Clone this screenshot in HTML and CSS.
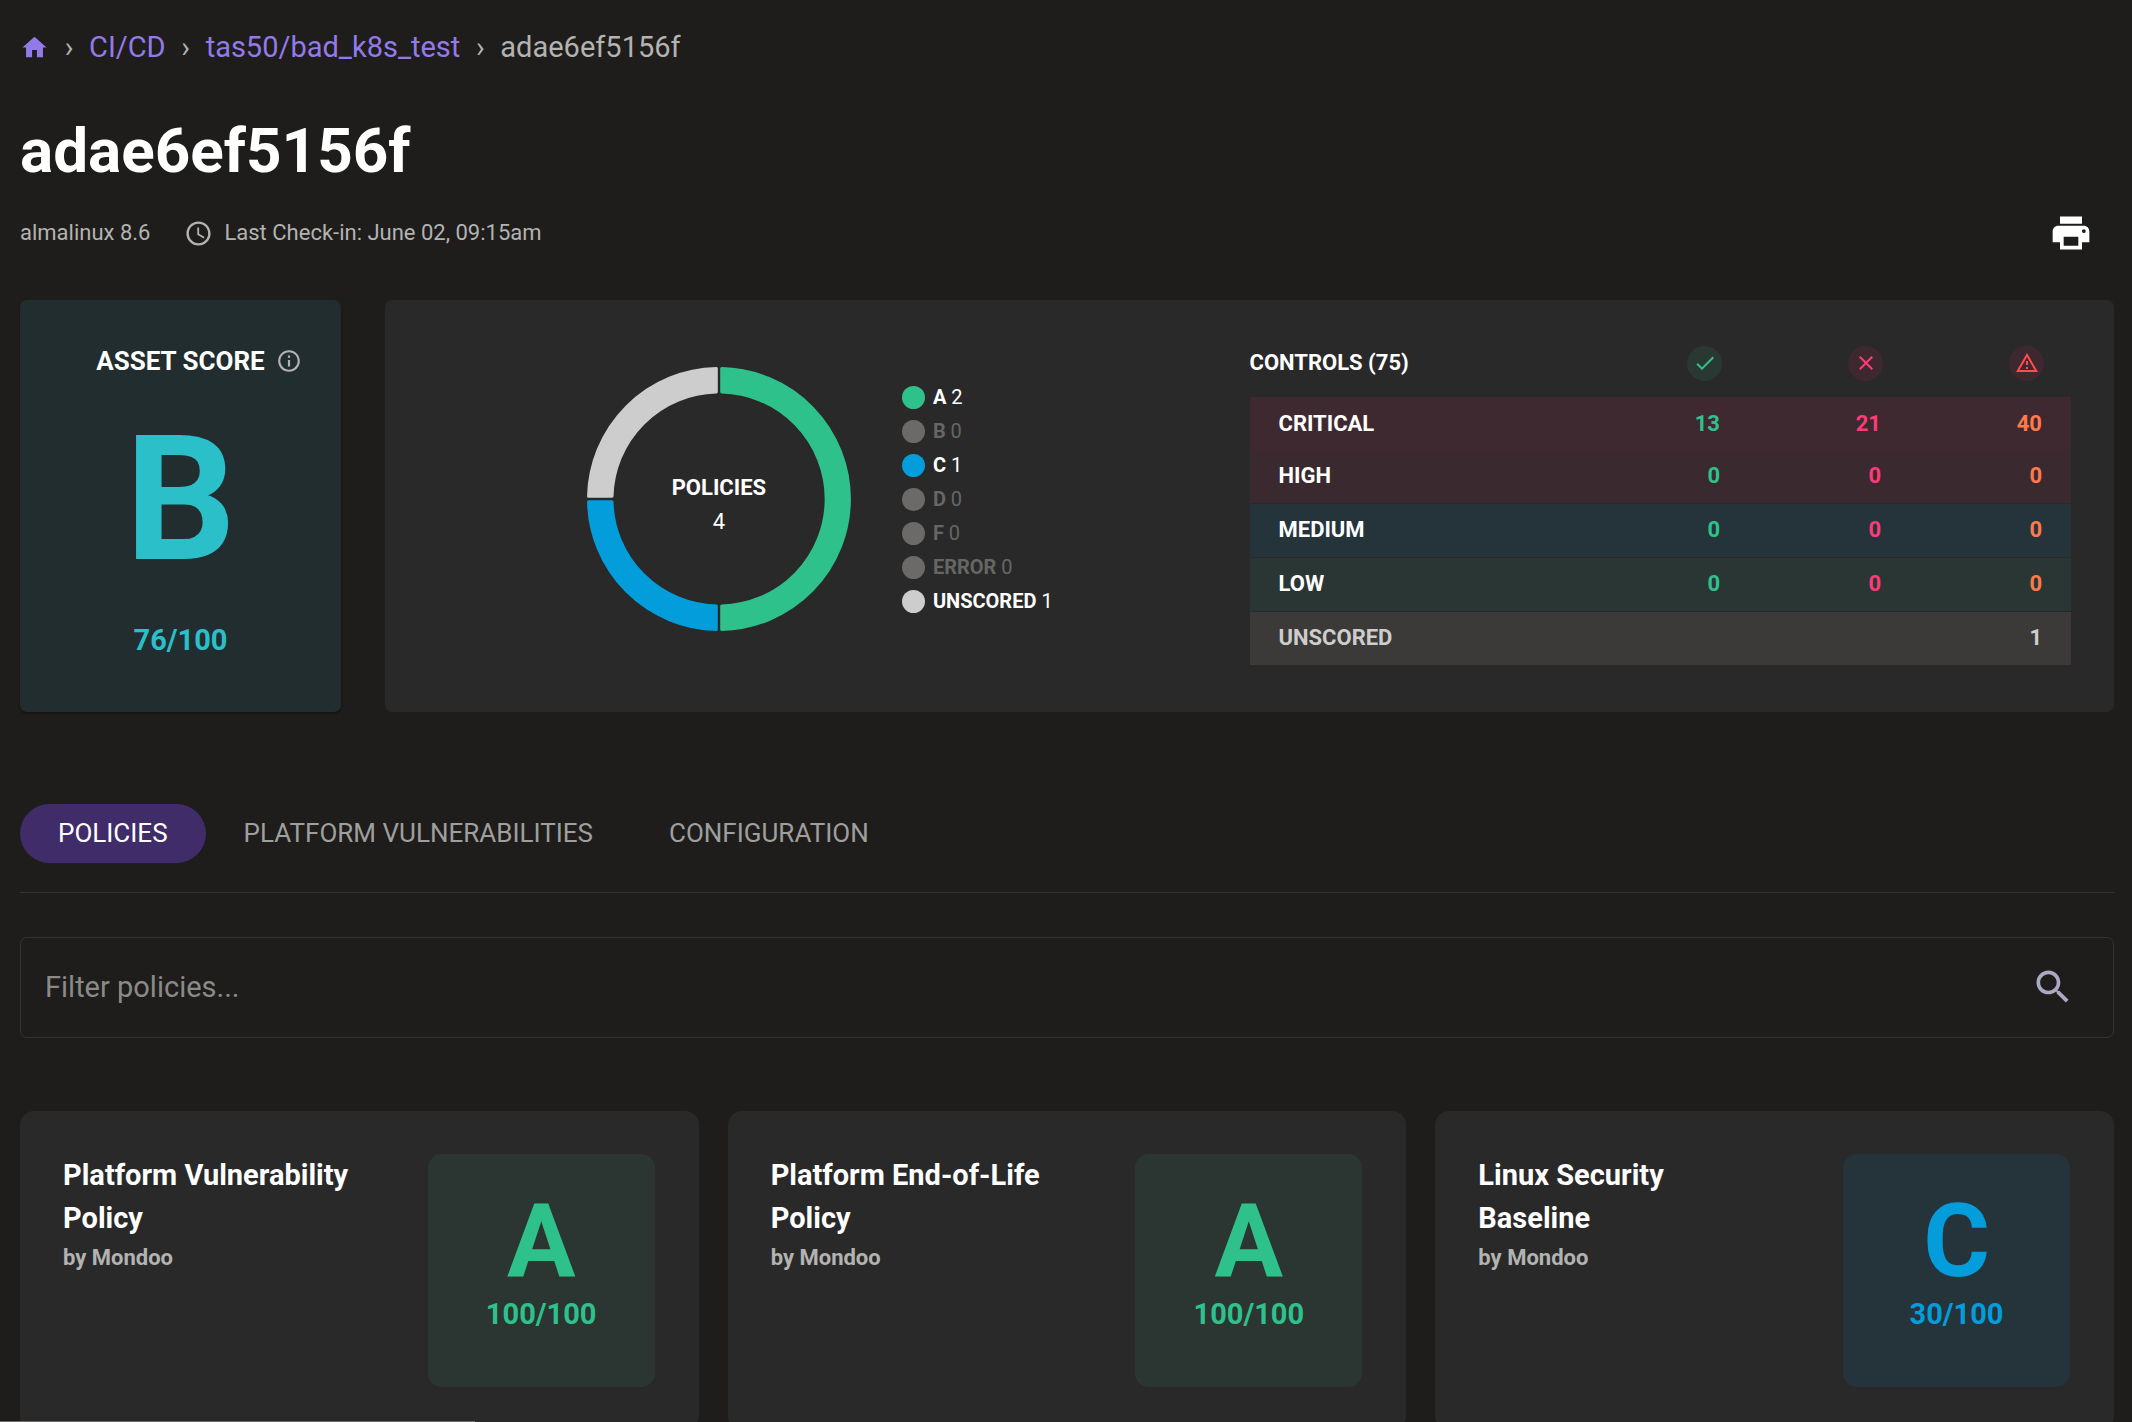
FILE: index.html
```html
<!DOCTYPE html>
<html lang="en">
<head>
<meta charset="utf-8">
<title>adae6ef5156f</title>
<meta name="viewport" content="width=device-width, initial-scale=1">
<link rel="stylesheet" href="styles.css">
</head>
<body>
<main class="page">
  <nav class="breadcrumbs" aria-label="Breadcrumb">
    <a class="crumb-home" href="#" aria-label="Home"><svg class="icon-home" viewBox="0 0 24 24"><path d="M10 20v-6h4v6h5v-8h3L12 3 2 12h3v8z"/></svg></a>
    <span class="crumb-sep">›</span>
    <a href="#">CI/CD</a>
    <span class="crumb-sep">›</span>
    <a href="#">tas50/bad_k8s_test</a>
    <span class="crumb-sep">›</span>
    <span>adae6ef5156f</span>
  </nav>

  <h1 class="title">adae6ef5156f</h1>

  <div class="meta">
    <span>almalinux 8.6</span>
    <span class="checkin"><svg class="icon-clock" viewBox="0 0 24 24"><path d="M11.99 2C6.47 2 2 6.48 2 12s4.47 10 9.99 10C17.52 22 22 17.52 22 12S17.52 2 11.99 2zM12 20c-4.42 0-8-3.58-8-8s3.58-8 8-8 8 3.58 8 8-3.58 8-8 8zm.5-13H11v6l5.25 3.15.75-1.23-4.5-2.67z"/></svg>Last Check-in: June 02, 09:15am</span>
    <button class="icon-button print" type="button" aria-label="Print"><svg class="icon-print" viewBox="0 0 24 24"><path d="M19 8H5c-1.66 0-3 1.34-3 3v6h4v4h12v-4h4v-6c0-1.66-1.34-3-3-3zm-3 11H8v-5h8v5zm3-7c-.55 0-1-.45-1-1s.45-1 1-1 1 .45 1 1-.45 1-1 1zm-1-9H6v4h12V3z"/></svg></button>
  </div>

  <section class="overview">
    <div class="asset-score">
      <div class="asset-head">
        <h2 class="asset-title">ASSET SCORE</h2>
        <svg class="icon-info" viewBox="0 0 24 24"><path d="M11 7h2v2h-2zm0 4h2v6h-2zm1-9C6.48 2 2 6.48 2 12s4.48 10 10 10 10-4.48 10-10S17.52 2 12 2zm0 18c-4.41 0-8-3.59-8-8s3.59-8 8-8 8 3.59 8 8-3.59 8-8 8z"/></svg>
      </div>
      <div class="asset-grade">B</div>
      <div class="asset-value">76/100</div>
    </div>

    <div class="panel">
      <div class="policies">
        <div class="donut">
          <svg class="donut-ring" viewBox="0 0 264 264">
            <g stroke-width="3" stroke-linejoin="round">
              <path class="seg-a" d="M134.7 1.53A130.5 130.5 0 0 1 134.7 262.47V238.97A107 107 0 0 0 134.7 25.03z"/>
              <path class="seg-c" d="M129.3 262.47A130.5 130.5 0 0 1 1.53 134.7H25.03A107 107 0 0 0 129.3 238.97z"/>
              <path class="seg-u" d="M1.53 129.3A130.5 130.5 0 0 1 129.3 1.53V25.03A107 107 0 0 0 25.03 129.3z"/>
            </g>
          </svg>
          <div class="donut-label"><strong>POLICIES</strong><span>4</span></div>
        </div>
        <ul class="legend">
          <li class="on"><i class="dot dot-a"></i><span><b>A</b> 2</span></li>
          <li><i class="dot"></i><span><b>B</b> 0</span></li>
          <li class="on"><i class="dot dot-c"></i><span><b>C</b> 1</span></li>
          <li><i class="dot"></i><span><b>D</b> 0</span></li>
          <li><i class="dot"></i><span><b>F</b> 0</span></li>
          <li><i class="dot"></i><span><b>ERROR</b> 0</span></li>
          <li class="on"><i class="dot dot-u"></i><span><b>UNSCORED</b> 1</span></li>
        </ul>
      </div>

      <table class="controls">
        <thead>
          <tr>
            <th scope="col" class="controls-title">CONTROLS (75)</th>
            <th scope="col" aria-label="Passed"><span class="badge badge-pass"><svg viewBox="0 0 24 24"><path d="M9 16.17 4.83 12l-1.42 1.41L9 19 21 7l-1.41-1.41z"/></svg></span></th>
            <th scope="col" aria-label="Failed"><span class="badge badge-fail"><svg viewBox="0 0 24 24"><path d="M19 6.41 17.59 5 12 10.59 6.41 5 5 6.41 10.59 12 5 17.59 6.41 19 12 13.41 17.59 19 19 17.59 13.41 12z"/></svg></span></th>
            <th scope="col" aria-label="Errors"><span class="badge badge-error"><svg viewBox="0 0 24 24"><path d="M12 5.99 19.53 19H4.47L12 5.99M12 2 1 21h22L12 2zm1 14h-2v2h2v-2zm0-6h-2v4h2v-4z"/></svg></span></th>
          </tr>
        </thead>
        <tbody>
          <tr class="row-critical"><th scope="row">CRITICAL</th><td class="pass">13</td><td class="fail">21</td><td class="error">40</td></tr>
          <tr class="row-high"><th scope="row">HIGH</th><td class="pass">0</td><td class="fail">0</td><td class="error">0</td></tr>
          <tr class="row-medium"><th scope="row">MEDIUM</th><td class="pass">0</td><td class="fail">0</td><td class="error">0</td></tr>
          <tr class="row-low"><th scope="row">LOW</th><td class="pass">0</td><td class="fail">0</td><td class="error">0</td></tr>
          <tr class="row-unscored"><th scope="row">UNSCORED</th><td></td><td></td><td>1</td></tr>
        </tbody>
      </table>
    </div>
  </section>

  <div class="tabs" role="tablist">
    <button class="tab tab-active" type="button" role="tab" aria-selected="true">POLICIES</button>
    <button class="tab" type="button" role="tab" aria-selected="false">PLATFORM VULNERABILITIES</button>
    <button class="tab" type="button" role="tab" aria-selected="false">CONFIGURATION</button>
  </div>

  <form class="filter">
    <input class="filter-input" type="text" placeholder="Filter policies..." aria-label="Filter policies">
    <button class="icon-button" type="button" aria-label="Search"><svg class="icon-search" viewBox="0 0 24 24"><path d="M15.5 14h-.79l-.28-.27C15.41 12.59 16 11.11 16 9.5 16 5.91 13.09 3 9.5 3S3 5.91 3 9.5 5.91 16 9.5 16c1.61 0 3.09-.59 4.23-1.57l.27.28v.79l5 4.99L20.49 19l-4.99-5zm-6 0C7.01 14 5 11.99 5 9.5S7.01 5 9.5 5 14 7.01 14 9.5 11.99 14 9.5 14z"/></svg></button>
  </form>

  <section class="cards">
    <article class="card">
      <div class="card-text"><h3>Platform Vulnerability Policy</h3><p>by Mondoo</p></div>
      <div class="score score-a"><span class="grade">A</span><span class="value">100/100</span></div>
    </article>
    <article class="card">
      <div class="card-text"><h3>Platform End-of-Life Policy</h3><p>by Mondoo</p></div>
      <div class="score score-a"><span class="grade">A</span><span class="value">100/100</span></div>
    </article>
    <article class="card">
      <div class="card-text"><h3>Linux Security Baseline</h3><p>by Mondoo</p></div>
      <div class="score score-c"><span class="grade">C</span><span class="value">30/100</span></div>
    </article>
  </section>
</main>
<div class="status-line"></div>
</body>
</html>
```
FILE: styles.css
```css
:root {
  --bg: #1e1d1b;
  --panel: #292929;
  --line: #333332;
  --text: #ffffff;
  --muted: #b3b3b2;
  --dim: #666665;
  --link: #9479e9;
  --green: #2fc18c;
  --blue: #039ddb;
  --teal: #2bbfca;
  --pink: #ff3a79;
  --orange: #ff7a4a;
  --light: #cdcdcd;
}

* { box-sizing: border-box; }

html { background: var(--bg); }

body {
  margin: 0;
  height: 100vh;
  overflow: hidden;
  background: var(--bg);
  color: var(--text);
  font-family: Roboto, "Liberation Sans", sans-serif;
  font-size: 22px;
  line-height: 32px;
}

h1, h2, h3, p, ul { margin: 0; padding: 0; }
a { color: var(--link); text-decoration: none; }
svg { display: block; fill: currentColor; }
button { font-family: inherit; cursor: pointer; }

.page { padding: 25px 18px 0 20px; }

.breadcrumbs {
  display: flex;
  align-items: center;
  font-size: 29px;
  line-height: 44px;
  color: var(--muted);
}
.icon-home { width: 29px; height: 29px; }
.crumb-sep { width: 40px; text-align: center; }

.title { margin-top: 44px; font-size: 62px; line-height: 76px; font-weight: 700; }

.meta { display: flex; align-items: center; margin-top: 11px; gap: 34px; color: var(--muted); }
.checkin { display: flex; align-items: center; gap: 11px; }
.icon-clock { width: 29px; height: 29px; }

.icon-button {
  display: flex;
  padding: 0;
  border: 0;
  background: none;
  color: #aaa8c3;
}
.print { margin-left: auto; margin-right: 21px; padding: 11px 0; color: var(--text); }
.icon-print { width: 44px; height: 44px; }

.overview {
  display: grid;
  grid-template-columns: 321px 1fr;
  gap: 44px;
  margin-top: 34px;
}

.asset-score {
  border-radius: 7px;
  padding: 43px 24px 40px;
  background: #212d2e;
  color: var(--teal);
  box-shadow: 0 2px 2px rgba(0, 0, 0, 0.3);
  font-weight: 700;
  text-align: center;
}
.asset-head {
  display: grid;
  grid-template-columns: 1fr auto 1fr;
  align-items: center;
  gap: 11px;
}
.asset-title { grid-column: 2; color: var(--text); font-size: 26px; line-height: 36px; }
.icon-info { width: 26px; height: 26px; color: var(--muted); }
.asset-grade { margin-top: 19px; font-size: 174px; line-height: 204px; }
.asset-value { margin-top: 16px; font-size: 29px; line-height: 44px; }

.panel {
  display: grid;
  grid-template-columns: 1fr 1fr;
  border-radius: 7px;
  padding: 37px 43px 46px;
  background: var(--panel);
}
.policies {
  display: flex;
  align-items: center;
  justify-content: center;
  gap: 51px;
  padding: 0 38px 4px 0;
}
.donut { display: grid; width: 264px; }
.donut-ring, .donut-label { grid-area: 1 / 1; }
.donut-label {
  display: flex;
  flex-direction: column;
  align-items: center;
  justify-content: center;
  padding-top: 12px;
  line-height: 34px;
}
.seg-a { fill: var(--green); stroke: var(--green); }
.seg-c { fill: var(--blue); stroke: var(--blue); }
.seg-u { fill: var(--light); stroke: var(--light); }

.legend { list-style: none; font-size: 20px; line-height: 34px; color: var(--dim); }
.legend li { display: flex; align-items: center; gap: 8px; }
.legend .on { color: var(--text); }
.dot { width: 23px; height: 23px; border-radius: 50%; background: #6b6a68; }
.dot-a { background: var(--green); }
.dot-c { background: var(--blue); }
.dot-u { background: var(--light); }

.controls { width: 100%; border-collapse: collapse; table-layout: fixed; align-self: start; }
.controls th, .controls td { height: 54px; padding: 0 29px; font-weight: 700; text-align: right; }
.controls td, .controls thead th { width: 161px; }
.controls tbody th, .controls thead .controls-title { width: auto; text-align: left; }
.controls thead th { height: 60px; padding: 0 27px 8px; }
.controls thead .controls-title { padding: 0 0 8px; }
.controls tbody tr { border-bottom: 1px solid var(--panel); }
.badge {
  display: inline-flex;
  align-items: center;
  justify-content: center;
  width: 35px;
  height: 35px;
  border-radius: 50%;
  vertical-align: middle;
}
.badge svg { width: 24px; height: 24px; }
.badge-pass { background: #2a3833; color: var(--green); }
.badge-fail { background: #3e282f; color: var(--pink); }
.badge-error { background: #3e282f; color: #ff4b4b; }
.controls tbody .row-critical { background: #3f2930; border: 0; }
.controls .row-critical > *, .controls .row-high > * { height: 53px; }
.row-high { background: #3b2930; }
.row-medium { background: #25333b; }
.row-low { background: #2a3634; }
.row-unscored { background: #3b3a38; color: var(--light); }
.pass { color: var(--green); }
.fail { color: var(--pink); }
.error { color: var(--orange); }

.tabs { display: flex; margin-top: 92px; padding-bottom: 29px; border-bottom: 1px solid var(--line); }
.tab {
  padding: 0 38px;
  border: 0;
  border-radius: 30px;
  background: none;
  color: #9f9f9e;
  font-size: 26px;
  line-height: 59px;
}
.tab-active { background: #402c69; color: var(--text); }

.filter {
  display: flex;
  align-items: center;
  margin-top: 44px;
  padding: 0 38px 0 24px;
  border: 1px solid var(--line);
  border-radius: 7px;
}
.filter-input {
  flex: 1;
  min-width: 0;
  height: 99px;
  padding: 0;
  border: 0;
  outline: 0;
  background: none;
  color: var(--text);
  font: inherit;
  font-size: 29px;
}
.filter-input::placeholder { color: #8a8a89; opacity: 1; }
.icon-search { width: 44px; height: 44px; }

.cards { display: grid; grid-template-columns: repeat(3, 1fr); gap: 29px; margin-top: 73px; }
.card {
  display: flex;
  justify-content: space-between;
  gap: 29px;
  padding: 43px 44px 43px 43px;
  border-radius: 14px;
  background: var(--panel);
}
.card-text { flex: 1; max-width: 300px; }
.card h3 { font-size: 29px; line-height: 43px; font-weight: 700; }
.card p { color: var(--muted); font-weight: 700; line-height: 36px; }
.score {
  display: flex;
  flex-direction: column;
  align-items: center;
  align-self: flex-start;
  width: 227px;
  height: 233px;
  padding-top: 36px;
  border-radius: 14px;
  font-weight: 700;
}
.grade { font-size: 102px; line-height: 102px; }
.value { font-size: 29px; line-height: 44px; }
.score-a { background: #2b3632; color: var(--green); }
.score-c { background: #25333a; color: var(--blue); }

/* Link status strip on the bottom edge of the window */
.status-line {
  position: fixed;
  left: 0;
  bottom: 0;
  width: 475px;
  height: 1px;
  background: #6b6a68;
}
```
